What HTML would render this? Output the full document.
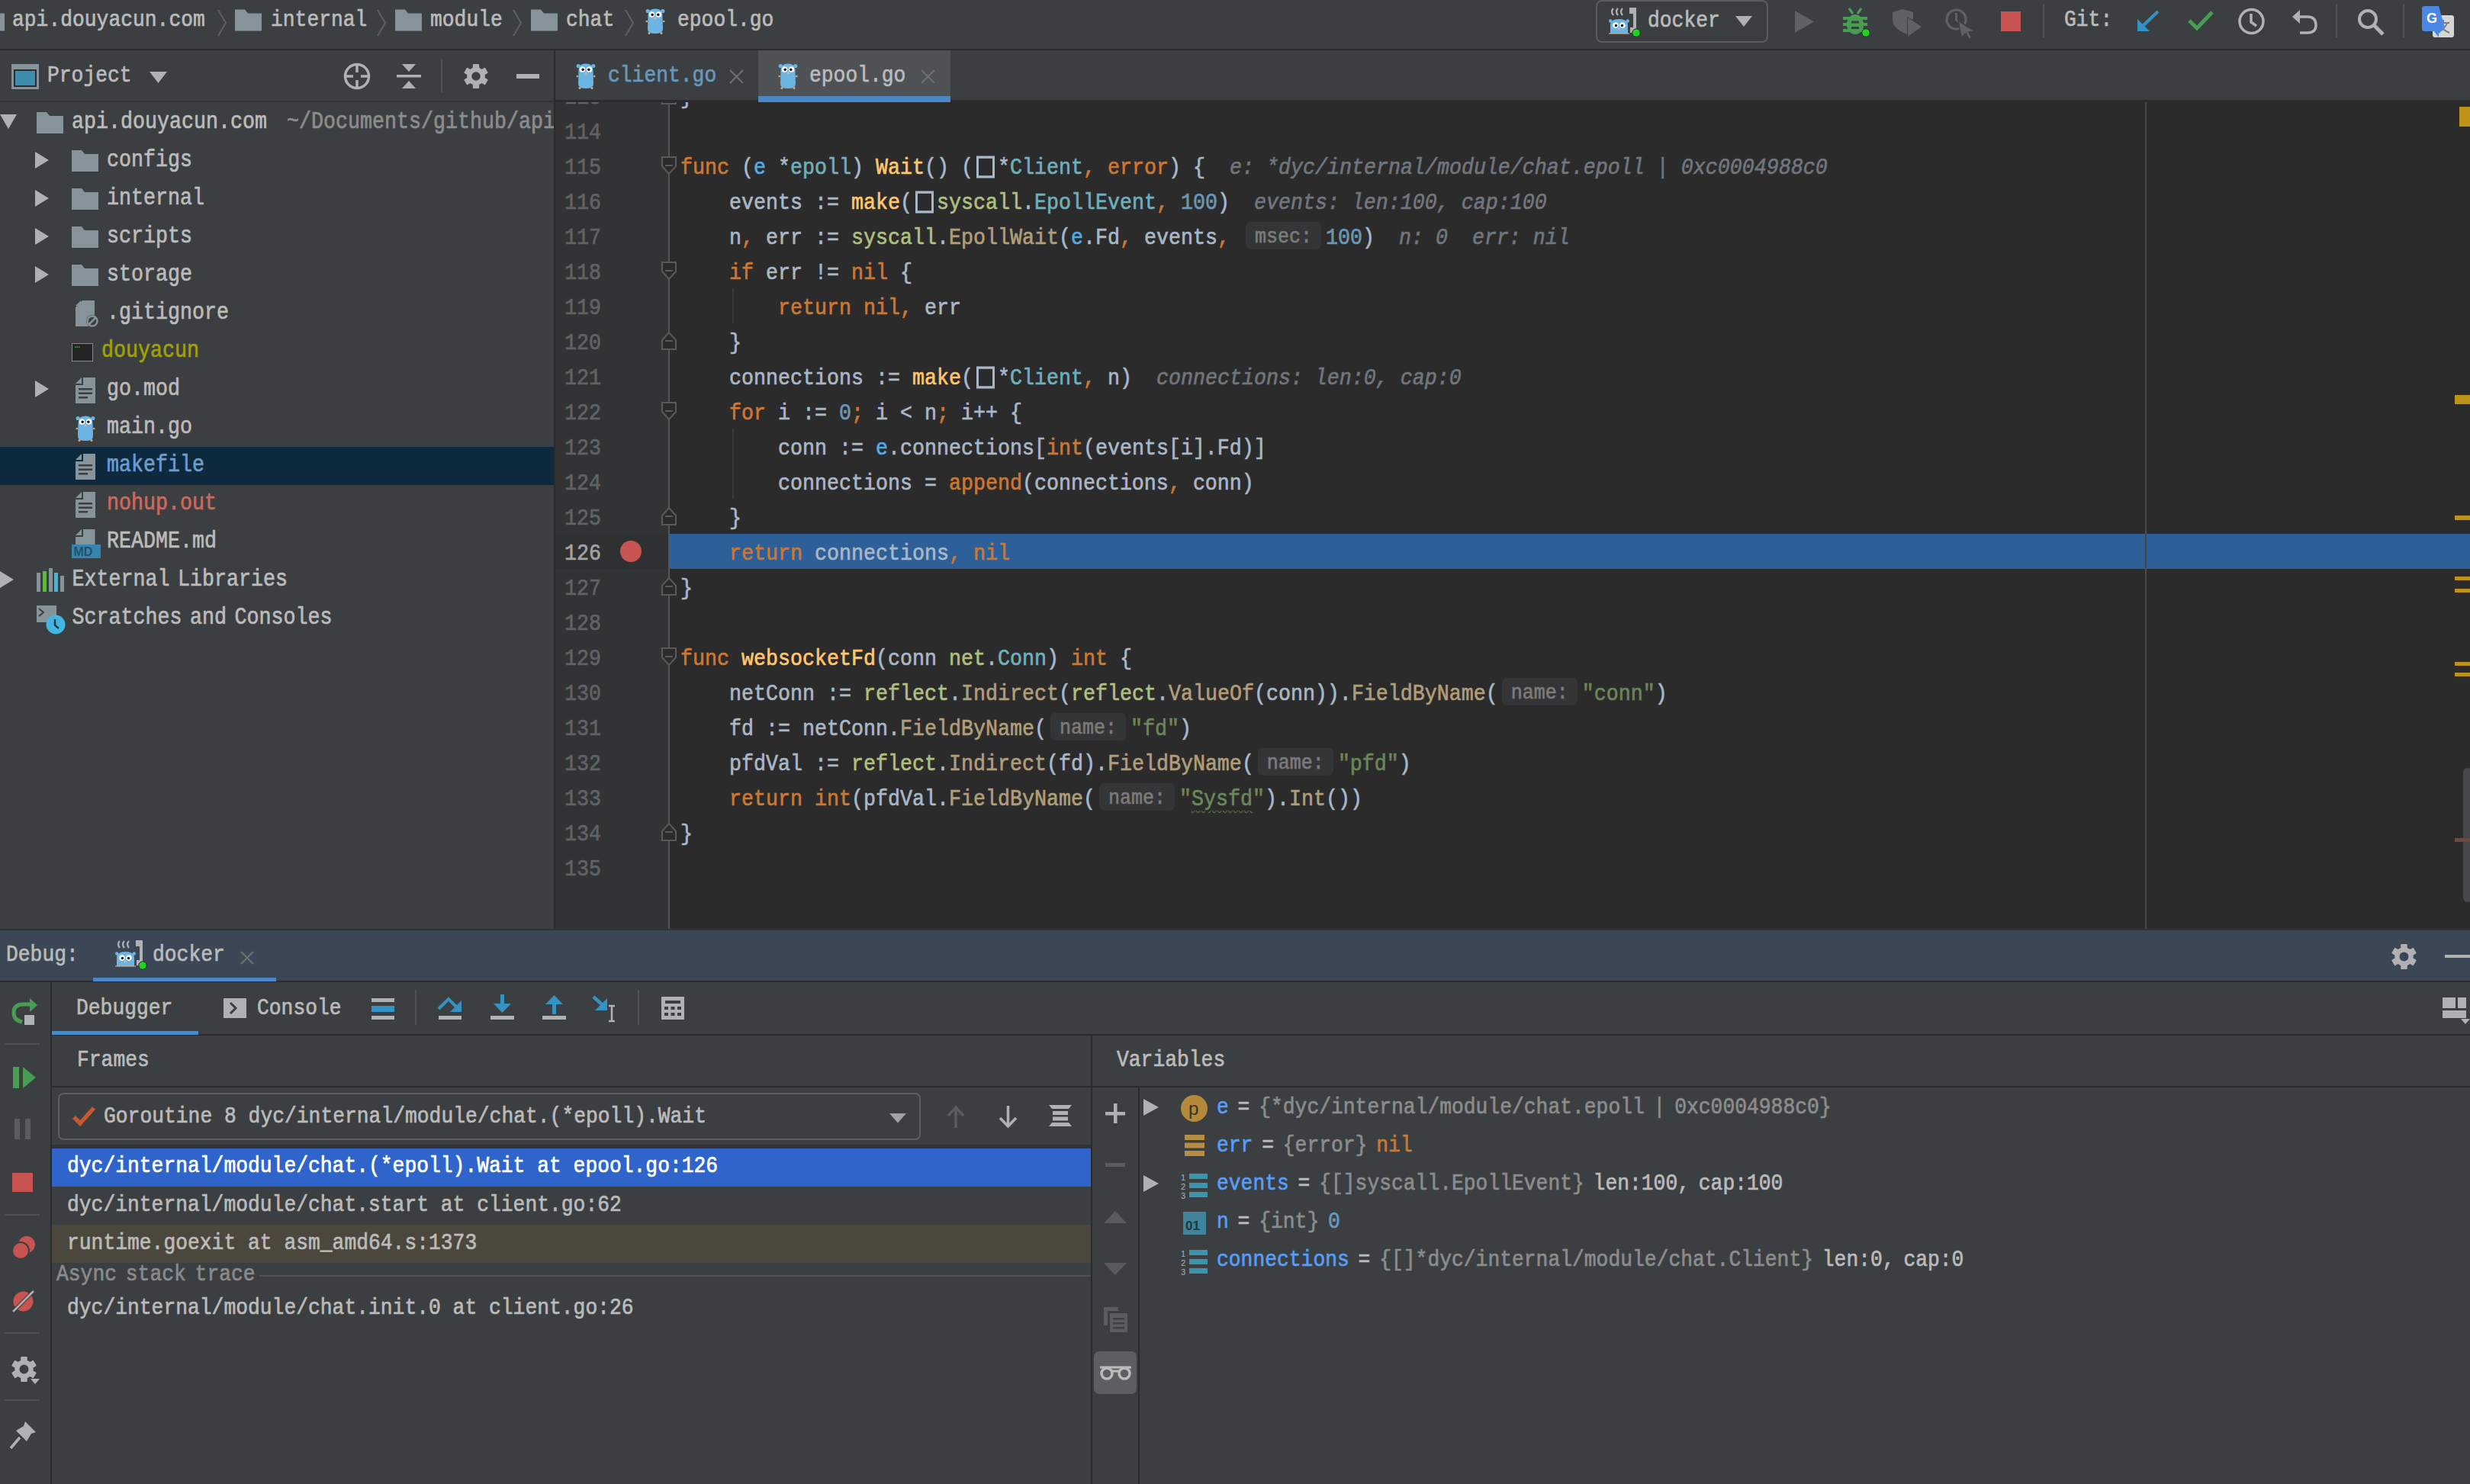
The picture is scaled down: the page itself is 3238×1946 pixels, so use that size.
<!DOCTYPE html><html><head><meta charset="utf-8"><style>
*{box-sizing:border-box}
html,body{margin:0;padding:0}
body{width:3238px;height:1946px;background:#3c3f41;position:relative;overflow:hidden;font-family:'Liberation Mono',monospace;}
.a{position:absolute}
.t{position:absolute;white-space:pre;transform:scaleY(1.15);-webkit-text-stroke:0.6px currentColor}
svg{position:absolute;overflow:visible}
.ed{position:absolute;left:728px;top:134px;width:2510px;height:1084px;overflow:hidden;background:#2b2b2b}
.ln{position:absolute;left:0;width:2510px;height:46px;font-size:26.67px;line-height:54px;white-space:pre;color:#a9b7c6;transform:scaleY(1.12);transform-origin:0 34.1px;-webkit-text-stroke:0.6px currentColor}
.k{color:#cc7832}.fn{color:#ffc66d}.ty{color:#6fafbd}.pk{color:#afbf7e}.me{color:#b09d79}.nu{color:#6897bb}.st{color:#6a8759}.pr{color:#4eade5}
.iv{font-style:italic;color:#70767e}
.hint{display:inline-block;width:99px;height:32px;margin:0 6px 0 5px;background:#343536;border-radius:6px;color:#7b7b7b;font-size:25px;line-height:32px;padding-top:2px;text-align:center;vertical-align:top;position:relative;top:8px}
.bx{display:inline-block;width:32px;height:1px;position:relative}
.bx:after{content:'';position:absolute;left:4px;top:-19.6px;width:24px;height:25.4px;border:3px solid #a9b7c6;border-left-width:3.5px;border-right-width:3.5px;box-sizing:border-box}
</style></head><body>
<div class="a" style="left:0px;top:0px;width:3238px;height:64px;background:#3c3f41;"></div>
<div class="a" style="left:0px;top:64px;width:3238px;height:2px;background:#2b2b2b;"></div>
<div class="a" style="left:0px;top:132px;width:726px;height:2px;background:#323232;"></div>
<div class="a" style="left:726px;top:66px;width:2px;height:1152px;background:#2b2b2b;"></div>
<div class="a" style="left:728px;top:131px;width:2510px;height:3px;background:#2b2b2b;"></div>
<svg style="left:-29px;top:12px" width="35" height="29" viewBox="0 0 35 28"><path d="M0 0 H13 L17 5 H35 V28 H0 Z" fill="#87939a"/></svg>
<div class="t" style="left:16px;top:7.49px;font-size:26.33px;line-height:40px;color:#bbbbbb;transform-origin:0 27.01px;">api.douyacun.com</div>
<svg style="left:285px;top:13px" width="12" height="34" viewBox="0 0 12 34"><path d="M1 0 L11 17 L1 34" stroke="#5c6164" stroke-width="2" fill="none"/></svg>
<svg style="left:308px;top:12px" width="35" height="29" viewBox="0 0 35 28"><path d="M0 0 H13 L17 5 H35 V28 H0 Z" fill="#87939a"/></svg>
<div class="t" style="left:355px;top:7.49px;font-size:26.33px;line-height:40px;color:#bbbbbb;transform-origin:0 27.01px;">internal</div>
<svg style="left:494px;top:13px" width="12" height="34" viewBox="0 0 12 34"><path d="M1 0 L11 17 L1 34" stroke="#5c6164" stroke-width="2" fill="none"/></svg>
<svg style="left:518px;top:12px" width="35" height="29" viewBox="0 0 35 28"><path d="M0 0 H13 L17 5 H35 V28 H0 Z" fill="#87939a"/></svg>
<div class="t" style="left:564px;top:7.49px;font-size:26.33px;line-height:40px;color:#bbbbbb;transform-origin:0 27.01px;">module</div>
<svg style="left:672px;top:13px" width="12" height="34" viewBox="0 0 12 34"><path d="M1 0 L11 17 L1 34" stroke="#5c6164" stroke-width="2" fill="none"/></svg>
<svg style="left:696px;top:12px" width="35" height="29" viewBox="0 0 35 28"><path d="M0 0 H13 L17 5 H35 V28 H0 Z" fill="#87939a"/></svg>
<div class="t" style="left:742px;top:7.49px;font-size:26.33px;line-height:40px;color:#bbbbbb;transform-origin:0 27.01px;">chat</div>
<svg style="left:819px;top:13px" width="12" height="34" viewBox="0 0 12 34"><path d="M1 0 L11 17 L1 34" stroke="#5c6164" stroke-width="2" fill="none"/></svg>
<svg style="left:846px;top:9px" width="26" height="36" viewBox="0 0 26 36"><path d="M3.5 11 Q3.5 2.5 13 2.5 Q22.5 2.5 22.5 11 L23 29 Q23 35 13 35 Q3 35 3 29 Z" fill="#6cb4e2"/><circle cx="3.2" cy="5.5" r="2.6" fill="#6cb4e2"/><circle cx="22.8" cy="5.5" r="2.6" fill="#6cb4e2"/><circle cx="8.5" cy="10" r="3.8" fill="#fff"/><circle cx="17.5" cy="10" r="3.8" fill="#fff"/><circle cx="9.2" cy="10.3" r="1.7" fill="#111"/><circle cx="16.8" cy="10.3" r="1.7" fill="#111"/><ellipse cx="13" cy="14.8" rx="1.8" ry="1.3" fill="#d9b48f"/><circle cx="1.8" cy="19" r="1.3" fill="#d9a982"/><circle cx="24.2" cy="19" r="1.3" fill="#d9a982"/><circle cx="5" cy="34.5" r="1.5" fill="#d9a982"/><circle cx="21" cy="34.5" r="1.5" fill="#d9a982"/></svg>
<div class="t" style="left:888px;top:7.49px;font-size:26.33px;line-height:40px;color:#bbbbbb;transform-origin:0 27.01px;">epool.go</div>
<div class="a" style="left:2092px;top:0px;width:226px;height:56px;border:2px solid #5a5d5f;border-radius:8px"></div>
<svg style="left:2109px;top:9px" width="42" height="40" viewBox="0 0 42 40"><path d="M6 2 Q2 6 6 11 M12 2 Q8 6 12 11 M18 2 Q14 6 18 11" stroke="#afb1b3" stroke-width="2.2" fill="none"/><path d="M27 1 H36 V34 H28 V27 H32 V9 H27 Z" fill="#afb1b3"/><path d="M2 24 Q2 16 13.5 16 Q25 16 25 24 V35 H2 Z" fill="#6cb4e2"/><circle cx="2.2" cy="18.5" r="2.2" fill="#6cb4e2"/><circle cx="24.8" cy="18.5" r="2.2" fill="#6cb4e2"/><circle cx="9" cy="24" r="3.8" fill="#fff"/><circle cx="18" cy="24" r="3.8" fill="#fff"/><circle cx="9.5" cy="24.5" r="1.7" fill="#111"/><circle cx="17.5" cy="24.5" r="1.7" fill="#111"/><ellipse cx="13.5" cy="29" rx="1.8" ry="1.2" fill="#d9b48f"/><rect x="0" y="34" width="27" height="2" fill="#d9a982" opacity="0.6"/><circle cx="36" cy="34" r="5.2" fill="#1ed41e" stroke="#2b2b2b" stroke-width="1"/></svg>
<div class="t" style="left:2160px;top:7.99px;font-size:26.33px;line-height:40px;color:#bbbbbb;transform-origin:0 27.01px;">docker</div>
<svg style="left:2275px;top:21px" width="22" height="14" viewBox="0 0 22 14"><path d="M0 0 H22 L11.0 14 Z" fill="#afb1b3"/></svg>
<svg style="left:2353px;top:14px" width="25" height="29" viewBox="0 0 25 29"><path d="M0 0 L25 14.5 L0 29 Z" fill="#5f6163"/></svg>
<svg style="left:2416px;top:10px" width="32" height="36" viewBox="0 0 32 36"><path d="M8 1 L13 8 M24 1 L19 8" stroke="#499c54" stroke-width="3.2"/><ellipse cx="16" cy="22" rx="11" ry="13" fill="#499c54"/><rect x="0" y="12" width="32" height="4" fill="#499c54"/><rect x="0" y="20" width="32" height="4" fill="#499c54"/><rect x="0" y="28" width="32" height="4" fill="#499c54"/><rect x="11" y="17.5" width="10" height="3" fill="#3c3f41"/><rect x="11" y="25" width="10" height="3" fill="#3c3f41"/><circle cx="30" cy="33" r="5.2" fill="#1ed41e" stroke="#2b2b2b" stroke-width="1"/></svg>
<svg style="left:2481px;top:12px" width="39" height="36" viewBox="0 0 39 36"><path d="M0 4 L13 0 L27 4 V14 L19 10 V33 Q6 28 1 20 Q0 17 0 14 Z" fill="#5f6163"/><path d="M20 11 L38 23 L20 36 Z" fill="#5f6163"/></svg>
<svg style="left:2550px;top:11px" width="40" height="40" viewBox="0 0 40 40"><circle cx="14.5" cy="14.5" r="12.5" stroke="#5f6163" stroke-width="3.2" fill="none"/><path d="M14.5 6 V15 L19 19" stroke="#5f6163" stroke-width="3" fill="none"/><path d="M17 16 L39 30 L31 31 L35 39 L31 40 L27 33 L21 38 Z" fill="#5f6163" stroke="#3c3f41" stroke-width="1.5"/></svg>
<div class="a" style="left:2623px;top:15px;width:26px;height:26px;background:#c75450;"></div>
<div class="a" style="left:2678px;top:5px;width:2px;height:44px;background:#4f5254;"></div>
<div class="t" style="left:2706px;top:6.99px;font-size:26.33px;line-height:40px;color:#bbbbbb;transform-origin:0 27.01px;">Git:</div>
<svg style="left:2802px;top:13px" width="29" height="28" viewBox="0 0 29 28"><path d="M27 2 L6 22" stroke="#3592c4" stroke-width="4"/><path d="M0 12 V28 H16 Z" fill="#3592c4"/></svg>
<svg style="left:2868px;top:14px" width="34" height="26" viewBox="0 0 34 26"><path d="M2 13 L12 23 L32 2" stroke="#499c54" stroke-width="5" fill="none"/></svg>
<svg style="left:2933px;top:10px" width="37" height="36" viewBox="0 0 37 36"><circle cx="18.5" cy="18" r="15.5" stroke="#afb1b3" stroke-width="3.5" fill="none"/><path d="M18 8 V19 L25 24" stroke="#afb1b3" stroke-width="3.5" fill="none"/></svg>
<svg style="left:3005px;top:12px" width="33" height="32" viewBox="0 0 33 32"><path d="M8 10 H20 Q31 10 31 21 Q31 31 20 31 H10" stroke="#afb1b3" stroke-width="3.5" fill="none"/><path d="M0 10 L10 1 V19 Z" fill="#afb1b3"/></svg>
<div class="a" style="left:3062px;top:5px;width:2px;height:44px;background:#4f5254;"></div>
<svg style="left:3090px;top:11px" width="36" height="36" viewBox="0 0 36 36"><circle cx="14" cy="14" r="11" stroke="#afb1b3" stroke-width="4" fill="none"/><path d="M22 22 L34 34" stroke="#afb1b3" stroke-width="5"/></svg>
<div class="a" style="left:3150px;top:5px;width:2px;height:44px;background:#4f5254;"></div>
<svg style="left:3175px;top:8px" width="42" height="41" viewBox="0 0 42 41"><rect x="14" y="12" width="28" height="29" rx="3" fill="#d6d6d6"/><path d="M20 22 H36 M28 18 V22 M22 34 Q30 30 33 22 M24 25 Q28 32 36 35" stroke="#7d7d7d" stroke-width="2" fill="none"/><path d="M3 0 H22 L30 28 L22 36 V41 L16 33 H3 Q0 33 0 30 V3 Q0 0 3 0 Z" fill="#4a88e4"/><text x="6" y="22" font-family="Liberation Sans" font-weight="bold" font-size="18" fill="#fff">G</text></svg>
<svg style="left:15px;top:84px" width="36" height="33" viewBox="0 0 36 33"><rect x="0" y="0" width="36" height="33" fill="#87939a"/><rect x="3" y="7" width="30" height="23" fill="#2b2d2e"/><rect x="5" y="9" width="26" height="19" fill="#3d8dae"/></svg>
<div class="t" style="left:62px;top:79.99px;font-size:26.33px;line-height:40px;color:#bbbbbb;transform-origin:0 27.01px;">Project</div>
<svg style="left:196px;top:94px" width="23" height="15" viewBox="0 0 23 15"><path d="M0 0 H23 L11.5 15 Z" fill="#afb1b3"/></svg>
<svg style="left:450px;top:82px" width="36" height="36" viewBox="0 0 36 36"><circle cx="18" cy="18" r="15.5" stroke="#afb1b3" stroke-width="3.5" fill="none"/><path d="M18 2 V13 M18 23 V34 M2 18 H13 M23 18 H34" stroke="#afb1b3" stroke-width="3.5"/></svg>
<svg style="left:520px;top:84px" width="32" height="32" viewBox="0 0 32 32"><rect x="0" y="14" width="32" height="3.5" fill="#afb1b3"/><path d="M7 0 H25 L16 10 Z M7 32 H25 L16 22 Z" fill="#afb1b3"/><rect x="14" y="0" width="4" height="4" fill="#afb1b3"/></svg>
<div class="a" style="left:578px;top:77px;width:2px;height:44px;background:#4f5254;"></div>
<svg style="left:608px;top:84px" width="32" height="32" viewBox="0 0 32 32"><circle cx="16.0" cy="16.0" r="11.84" fill="#afb1b3"/><rect x="11.84" y="0" width="8.32" height="32" rx="0.96" fill="#afb1b3" transform="rotate(0 16.0 16.0)"/><rect x="11.84" y="0" width="8.32" height="32" rx="0.96" fill="#afb1b3" transform="rotate(60 16.0 16.0)"/><rect x="11.84" y="0" width="8.32" height="32" rx="0.96" fill="#afb1b3" transform="rotate(120 16.0 16.0)"/><circle cx="16.0" cy="16.0" r="5.76" fill="#3c3f41"/></svg>
<div class="a" style="left:677px;top:97px;width:30px;height:6px;background:#afb1b3;"></div>
<svg style="left:755px;top:81px" width="26" height="36" viewBox="0 0 26 36"><path d="M3.5 11 Q3.5 2.5 13 2.5 Q22.5 2.5 22.5 11 L23 29 Q23 35 13 35 Q3 35 3 29 Z" fill="#6cb4e2"/><circle cx="3.2" cy="5.5" r="2.6" fill="#6cb4e2"/><circle cx="22.8" cy="5.5" r="2.6" fill="#6cb4e2"/><circle cx="8.5" cy="10" r="3.8" fill="#fff"/><circle cx="17.5" cy="10" r="3.8" fill="#fff"/><circle cx="9.2" cy="10.3" r="1.7" fill="#111"/><circle cx="16.8" cy="10.3" r="1.7" fill="#111"/><ellipse cx="13" cy="14.8" rx="1.8" ry="1.3" fill="#d9b48f"/><circle cx="1.8" cy="19" r="1.3" fill="#d9a982"/><circle cx="24.2" cy="19" r="1.3" fill="#d9a982"/><circle cx="5" cy="34.5" r="1.5" fill="#d9a982"/><circle cx="21" cy="34.5" r="1.5" fill="#d9a982"/></svg>
<div class="t" style="left:797px;top:79.99px;font-size:26.33px;line-height:40px;color:#6897bb;transform-origin:0 27.01px;">client.go</div>
<svg style="left:956px;top:91px" width="19" height="19" viewBox="0 0 19 19"><path d="M1 1 L18 18 M18 1 L1 18" stroke="#6e7072" stroke-width="2.2"/></svg>
<div class="a" style="left:994px;top:66px;width:252px;height:60px;background:#4e5254;"></div>
<div class="a" style="left:994px;top:126px;width:252px;height:8px;background:#4a88c7;"></div>
<svg style="left:1020px;top:81px" width="26" height="36" viewBox="0 0 26 36"><path d="M3.5 11 Q3.5 2.5 13 2.5 Q22.5 2.5 22.5 11 L23 29 Q23 35 13 35 Q3 35 3 29 Z" fill="#6cb4e2"/><circle cx="3.2" cy="5.5" r="2.6" fill="#6cb4e2"/><circle cx="22.8" cy="5.5" r="2.6" fill="#6cb4e2"/><circle cx="8.5" cy="10" r="3.8" fill="#fff"/><circle cx="17.5" cy="10" r="3.8" fill="#fff"/><circle cx="9.2" cy="10.3" r="1.7" fill="#111"/><circle cx="16.8" cy="10.3" r="1.7" fill="#111"/><ellipse cx="13" cy="14.8" rx="1.8" ry="1.3" fill="#d9b48f"/><circle cx="1.8" cy="19" r="1.3" fill="#d9a982"/><circle cx="24.2" cy="19" r="1.3" fill="#d9a982"/><circle cx="5" cy="34.5" r="1.5" fill="#d9a982"/><circle cx="21" cy="34.5" r="1.5" fill="#d9a982"/></svg>
<div class="t" style="left:1061px;top:79.99px;font-size:26.33px;line-height:40px;color:#bbbbbb;transform-origin:0 27.01px;">epool.go</div>
<svg style="left:1207px;top:91px" width="19" height="19" viewBox="0 0 19 19"><path d="M1 1 L18 18 M18 1 L1 18" stroke="#6e7072" stroke-width="2.2"/></svg>
<div class="a" style="left:0px;top:586px;width:726px;height:50px;background:#0d293e;"></div>
<svg style="left:0px;top:150px" width="22" height="19" viewBox="0 0 22 19"><path d="M0 0 H22 L11.0 19 Z" fill="#afb1b3"/></svg>
<svg style="left:48px;top:147px" width="35" height="28" viewBox="0 0 35 28"><path d="M0 0 H13 L17 5 H35 V28 H0 Z" fill="#87939a"/></svg>
<div class="t" style="left:94px;top:140.60px;font-size:26.67px;line-height:40px;color:#bbbbbb;transform-origin:0 27.10px;">api.douyacun.com</div>
<div class="a" style="left:0;top:134px;width:726px;height:60px;overflow:hidden">
<div class="t" style="left:376px;top:6.60px;font-size:26.67px;line-height:40px;color:#8c8c8c;transform-origin:0 27.10px;">~/Documents/github/api.douyacun.com</div>
</div>
<svg style="left:46px;top:199.0px" width="18" height="22" viewBox="0 0 18 22"><path d="M0 0 L18 11.0 L0 22 Z" fill="#afb1b3"/></svg>
<svg style="left:94px;top:196.7px" width="35" height="28" viewBox="0 0 35 28"><path d="M0 0 H13 L17 5 H35 V28 H0 Z" fill="#87939a"/></svg>
<div class="t" style="left:140px;top:190.60px;font-size:26.67px;line-height:40px;color:#bbbbbb;transform-origin:0 27.10px;">configs</div>
<svg style="left:46px;top:249.0px" width="18" height="22" viewBox="0 0 18 22"><path d="M0 0 L18 11.0 L0 22 Z" fill="#afb1b3"/></svg>
<svg style="left:94px;top:246.7px" width="35" height="28" viewBox="0 0 35 28"><path d="M0 0 H13 L17 5 H35 V28 H0 Z" fill="#87939a"/></svg>
<div class="t" style="left:140px;top:240.60px;font-size:26.67px;line-height:40px;color:#bbbbbb;transform-origin:0 27.10px;">internal</div>
<svg style="left:46px;top:299.0px" width="18" height="22" viewBox="0 0 18 22"><path d="M0 0 L18 11.0 L0 22 Z" fill="#afb1b3"/></svg>
<svg style="left:94px;top:296.7px" width="35" height="28" viewBox="0 0 35 28"><path d="M0 0 H13 L17 5 H35 V28 H0 Z" fill="#87939a"/></svg>
<div class="t" style="left:140px;top:290.60px;font-size:26.67px;line-height:40px;color:#bbbbbb;transform-origin:0 27.10px;">scripts</div>
<svg style="left:46px;top:349.0px" width="18" height="22" viewBox="0 0 18 22"><path d="M0 0 L18 11.0 L0 22 Z" fill="#afb1b3"/></svg>
<svg style="left:94px;top:346.7px" width="35" height="28" viewBox="0 0 35 28"><path d="M0 0 H13 L17 5 H35 V28 H0 Z" fill="#87939a"/></svg>
<div class="t" style="left:140px;top:340.60px;font-size:26.67px;line-height:40px;color:#bbbbbb;transform-origin:0 27.10px;">storage</div>
<svg style="left:99px;top:393.7px" width="30" height="36" viewBox="0 0 30 36"><path d="M9 0 H25 V22 L18 34 H0 V9 Z" fill="#87939a"/><path d="M0 7 L7 0 V7 Z" fill="#87939a"/><circle cx="22" cy="27" r="8" fill="#3c3f41"/><circle cx="22" cy="27" r="6.5" stroke="#87939a" stroke-width="2.5" fill="none"/><path d="M17.5 31.5 L26.5 22.5" stroke="#87939a" stroke-width="2.5"/></svg>
<div class="t" style="left:140px;top:390.60px;font-size:26.67px;line-height:40px;color:#bbbbbb;transform-origin:0 27.10px;">.gitignore</div>
<svg style="left:94px;top:449.7px" width="28" height="24" viewBox="0 0 28 24"><rect x="0.5" y="0.5" width="27" height="23" fill="#252525" stroke="#8a8a8a" stroke-width="1"/><path d="M4 5 H11" stroke="#3fc03f" stroke-width="1.5" stroke-dasharray="1.5 1"/></svg>
<div class="t" style="left:133px;top:440.60px;font-size:26.67px;line-height:40px;color:#a3a000;transform-origin:0 27.10px;">douyacun</div>
<svg style="left:46px;top:499.00000000000006px" width="18" height="22" viewBox="0 0 18 22"><path d="M0 0 L18 11.0 L0 22 Z" fill="#afb1b3"/></svg>
<svg style="left:99px;top:494.70000000000005px" width="26" height="34" viewBox="0 0 26 34"><path d="M10 0 H26 V34 H0 V10 H10 Z" fill="#87939a"/><path d="M0 8 L8 0 V8 Z" fill="#87939a"/><rect x="4" y="14" width="18" height="2.5" fill="#3c3f41"/><rect x="4" y="19.5" width="18" height="2.5" fill="#3c3f41"/><rect x="4" y="25" width="12" height="2.5" fill="#3c3f41"/></svg>
<div class="t" style="left:140px;top:490.60px;font-size:26.67px;line-height:40px;color:#bbbbbb;transform-origin:0 27.10px;">go.mod</div>
<svg style="left:99px;top:543px" width="26" height="36" viewBox="0 0 26 36"><path d="M3.5 11 Q3.5 2.5 13 2.5 Q22.5 2.5 22.5 11 L23 29 Q23 35 13 35 Q3 35 3 29 Z" fill="#6cb4e2"/><circle cx="3.2" cy="5.5" r="2.6" fill="#6cb4e2"/><circle cx="22.8" cy="5.5" r="2.6" fill="#6cb4e2"/><circle cx="8.5" cy="10" r="3.8" fill="#fff"/><circle cx="17.5" cy="10" r="3.8" fill="#fff"/><circle cx="9.2" cy="10.3" r="1.7" fill="#111"/><circle cx="16.8" cy="10.3" r="1.7" fill="#111"/><ellipse cx="13" cy="14.8" rx="1.8" ry="1.3" fill="#d9b48f"/><circle cx="1.8" cy="19" r="1.3" fill="#d9a982"/><circle cx="24.2" cy="19" r="1.3" fill="#d9a982"/><circle cx="5" cy="34.5" r="1.5" fill="#d9a982"/><circle cx="21" cy="34.5" r="1.5" fill="#d9a982"/></svg>
<div class="t" style="left:140px;top:540.60px;font-size:26.67px;line-height:40px;color:#bbbbbb;transform-origin:0 27.10px;">main.go</div>
<svg style="left:99px;top:594.7px" width="26" height="34" viewBox="0 0 26 34"><path d="M10 0 H26 V34 H0 V10 H10 Z" fill="#87939a"/><path d="M0 8 L8 0 V8 Z" fill="#87939a"/><rect x="4" y="14" width="18" height="2.5" fill="#3c3f41"/><rect x="4" y="19.5" width="18" height="2.5" fill="#3c3f41"/><rect x="4" y="25" width="12" height="2.5" fill="#3c3f41"/></svg>
<div class="t" style="left:140px;top:590.60px;font-size:26.67px;line-height:40px;color:#6a9ccf;transform-origin:0 27.10px;">makefile</div>
<svg style="left:99px;top:644.7px" width="26" height="34" viewBox="0 0 26 34"><path d="M10 0 H26 V34 H0 V10 H10 Z" fill="#87939a"/><path d="M0 8 L8 0 V8 Z" fill="#87939a"/><rect x="4" y="14" width="18" height="2.5" fill="#3c3f41"/><rect x="4" y="19.5" width="18" height="2.5" fill="#3c3f41"/><rect x="4" y="25" width="12" height="2.5" fill="#3c3f41"/></svg>
<div class="t" style="left:140px;top:640.60px;font-size:26.67px;line-height:40px;color:#d1675a;transform-origin:0 27.10px;">nohup.out</div>
<svg style="left:94px;top:694px" width="38" height="38" viewBox="0 0 38 38"><path d="M15 0 H30.5 V20 H5 V10 L15 10 Z" fill="#87939a"/><path d="M5 8 L13 0 V8 Z" fill="#87939a"/><rect x="0" y="20" width="38" height="18" fill="#3592c4" opacity="0.85"/><text x="2.5" y="35" font-family="Liberation Sans" font-weight="bold" font-size="16" fill="#25526a">MD</text></svg>
<div class="t" style="left:140px;top:690.60px;font-size:26.67px;line-height:40px;color:#bbbbbb;transform-origin:0 27.10px;">README.md</div>
<svg style="left:0px;top:748.7px" width="18" height="22" viewBox="0 0 18 22"><path d="M0 0 L18 11.0 L0 22 Z" fill="#afb1b3"/></svg>
<svg style="left:48px;top:744.7px" width="36" height="31" viewBox="0 0 36 31"><rect x="0" y="6" width="5" height="25" fill="#87939a"/><rect x="8" y="4" width="5" height="27" fill="#62b543"/><rect x="16" y="0" width="5" height="31" fill="#87939a"/><rect x="23" y="6" width="5" height="25" fill="#40b6e0"/><rect x="31" y="10" width="5" height="21" fill="#87939a"/></svg>
<div class="t" style="left:94.5px;top:740.60px;font-size:26.67px;line-height:40px;color:#bbbbbb;transform-origin:0 27.10px;word-spacing:-5.5px">External Libraries</div>
<svg style="left:48px;top:793.7px" width="38" height="38" viewBox="0 0 38 38"><rect x="0" y="0" width="26" height="22" fill="#87939a"/><path d="M3 4 L9 9 L3 14" stroke="#3c3f41" stroke-width="2" fill="none"/><circle cx="25" cy="25" r="12.5" fill="#40b6e0"/><path d="M24 18 V26 L29 30" stroke="#1d3a4a" stroke-width="2.5" fill="none"/></svg>
<div class="t" style="left:94.5px;top:790.60px;font-size:26.67px;line-height:40px;color:#bbbbbb;transform-origin:0 27.10px;word-spacing:-5.5px">Scratches and Consoles</div>
<div class="ed">
<div class="a" style="left:0;top:0;width:148px;height:1085px;background:#313335"></div>
<div class="a" style="left:148px;top:0;width:2px;height:1085px;background:#555555"></div>
<div class="a" style="left:150px;top:566px;width:2360px;height:46px;background:#2d6099"></div>
<div class="a" style="left:0;top:566px;width:148px;height:46px;background:#2f3031"></div>
<div class="a" style="left:2084px;top:0;width:2px;height:1085px;background:#4b4b4b"></div>
<div class="a" style="left:2084px;top:566px;width:2px;height:46px;background:#4a4540"></div>
<div class="a" style="left:2496px;top:5.599999999999994px;width:14px;height:26.0px;background:#be9117"></div>
<div class="a" style="left:2490px;top:384px;width:20px;height:12px;background:#be9117"></div>
<div class="a" style="left:2490px;top:542px;width:20px;height:6px;background:#be9117"></div>
<div class="a" style="left:2490px;top:622px;width:20px;height:5px;background:#be9117"></div>
<div class="a" style="left:2490px;top:638px;width:20px;height:5px;background:#be9117"></div>
<div class="a" style="left:2490px;top:734px;width:20px;height:5px;background:#be9117"></div>
<div class="a" style="left:2490px;top:748px;width:20px;height:5px;background:#be9117"></div>
<div class="a" style="left:2501px;top:873px;width:12px;height:176px;background:#464849;border-radius:6px"></div>
<div class="a" style="left:2490px;top:965px;width:20px;height:5px;background:#6e4a3e"></div>
<div class="ln" style="top:-32px;left:0;width:60px;color:#606366;text-align:right;padding:0">113</div>
<div class="ln" style="top:14px;left:0;width:60px;color:#606366;text-align:right;padding:0">114</div>
<div class="ln" style="top:60px;left:0;width:60px;color:#606366;text-align:right;padding:0">115</div>
<div class="ln" style="top:106px;left:0;width:60px;color:#606366;text-align:right;padding:0">116</div>
<div class="ln" style="top:152px;left:0;width:60px;color:#606366;text-align:right;padding:0">117</div>
<div class="ln" style="top:198px;left:0;width:60px;color:#606366;text-align:right;padding:0">118</div>
<div class="ln" style="top:244px;left:0;width:60px;color:#606366;text-align:right;padding:0">119</div>
<div class="ln" style="top:290px;left:0;width:60px;color:#606366;text-align:right;padding:0">120</div>
<div class="ln" style="top:336px;left:0;width:60px;color:#606366;text-align:right;padding:0">121</div>
<div class="ln" style="top:382px;left:0;width:60px;color:#606366;text-align:right;padding:0">122</div>
<div class="ln" style="top:428px;left:0;width:60px;color:#606366;text-align:right;padding:0">123</div>
<div class="ln" style="top:474px;left:0;width:60px;color:#606366;text-align:right;padding:0">124</div>
<div class="ln" style="top:520px;left:0;width:60px;color:#606366;text-align:right;padding:0">125</div>
<div class="ln" style="top:566px;left:0;width:60px;color:#a4a3a3;text-align:right;padding:0">126</div>
<div class="ln" style="top:612px;left:0;width:60px;color:#606366;text-align:right;padding:0">127</div>
<div class="ln" style="top:658px;left:0;width:60px;color:#606366;text-align:right;padding:0">128</div>
<div class="ln" style="top:704px;left:0;width:60px;color:#606366;text-align:right;padding:0">129</div>
<div class="ln" style="top:750px;left:0;width:60px;color:#606366;text-align:right;padding:0">130</div>
<div class="ln" style="top:796px;left:0;width:60px;color:#606366;text-align:right;padding:0">131</div>
<div class="ln" style="top:842px;left:0;width:60px;color:#606366;text-align:right;padding:0">132</div>
<div class="ln" style="top:888px;left:0;width:60px;color:#606366;text-align:right;padding:0">133</div>
<div class="ln" style="top:934px;left:0;width:60px;color:#606366;text-align:right;padding:0">134</div>
<div class="ln" style="top:980px;left:0;width:60px;color:#606366;text-align:right;padding:0">135</div>
<div class="a" style="left:232px;top:244px;width:2px;height:46px;background:#393939"></div>
<div class="a" style="left:232px;top:428px;width:2px;height:92px;background:#393939"></div>
<div class="a" style="left:85px;top:575px;width:28px;height:28px;border-radius:50%;background:#c75450"></div>
<svg style="left:139px;top:-21px" width="20" height="24"><path d="M1 23 H19 V11 L10 1 L1 11 Z" fill="#2b2b2b" stroke="#5a5a5a" stroke-width="2"/><path d="M5 12 H15" stroke="#5a5a5a" stroke-width="2"/></svg>
<svg style="left:139px;top:71px" width="20" height="24"><path d="M1 1 H19 V13 L10 23 L1 13 Z" fill="#2b2b2b" stroke="#5a5a5a" stroke-width="2"/><path d="M5 12 H15" stroke="#5a5a5a" stroke-width="2"/></svg>
<svg style="left:139px;top:209px" width="20" height="24"><path d="M1 1 H19 V13 L10 23 L1 13 Z" fill="#2b2b2b" stroke="#5a5a5a" stroke-width="2"/><path d="M5 12 H15" stroke="#5a5a5a" stroke-width="2"/></svg>
<svg style="left:139px;top:301px" width="20" height="24"><path d="M1 23 H19 V11 L10 1 L1 11 Z" fill="#2b2b2b" stroke="#5a5a5a" stroke-width="2"/><path d="M5 12 H15" stroke="#5a5a5a" stroke-width="2"/></svg>
<svg style="left:139px;top:393px" width="20" height="24"><path d="M1 1 H19 V13 L10 23 L1 13 Z" fill="#2b2b2b" stroke="#5a5a5a" stroke-width="2"/><path d="M5 12 H15" stroke="#5a5a5a" stroke-width="2"/></svg>
<svg style="left:139px;top:531px" width="20" height="24"><path d="M1 23 H19 V11 L10 1 L1 11 Z" fill="#2b2b2b" stroke="#5a5a5a" stroke-width="2"/><path d="M5 12 H15" stroke="#5a5a5a" stroke-width="2"/></svg>
<svg style="left:139px;top:623px" width="20" height="24"><path d="M1 23 H19 V11 L10 1 L1 11 Z" fill="#2b2b2b" stroke="#5a5a5a" stroke-width="2"/><path d="M5 12 H15" stroke="#5a5a5a" stroke-width="2"/></svg>
<svg style="left:139px;top:715px" width="20" height="24"><path d="M1 1 H19 V13 L10 23 L1 13 Z" fill="#2b2b2b" stroke="#5a5a5a" stroke-width="2"/><path d="M5 12 H15" stroke="#5a5a5a" stroke-width="2"/></svg>
<svg style="left:139px;top:945px" width="20" height="24"><path d="M1 23 H19 V11 L10 1 L1 11 Z" fill="#2b2b2b" stroke="#5a5a5a" stroke-width="2"/><path d="M5 12 H15" stroke="#5a5a5a" stroke-width="2"/></svg>
<div class="ln" style="top:-32px;left:164px">}</div>
<div class="ln" style="top:60px;left:164px"><span class="k">func</span> (<span class="pr">e</span> *<span class="ty">epoll</span>) <span class="fn">Wait</span>() (<span class="bx"></span>*<span class="ty">Client</span><span class="k">, </span><span class="k">error</span>) {<span class="iv" style="margin-left:32px">e: *dyc/internal/module/chat.epoll | 0xc0004988c0</span></div>
<div class="ln" style="top:106px;left:164px">    events := <span class="fn">make</span>(<span class="bx"></span><span class="pk">syscall</span>.<span class="ty">EpollEvent</span><span class="k">, </span><span class="nu">100</span>)<span class="iv" style="margin-left:32px">events: len:100, cap:100</span></div>
<div class="ln" style="top:152px;left:164px">    n<span class="k">, </span>err := <span class="pk">syscall</span>.<span class="me">EpollWait</span>(<span class="pr">e</span>.Fd<span class="k">, </span>events<span class="k">, </span><span class="hint">msec:</span><span class="nu">100</span>)<span class="iv" style="margin-left:32px">n: 0  err: nil</span></div>
<div class="ln" style="top:198px;left:164px">    <span class="k">if</span> err != <span class="k">nil</span> {</div>
<div class="ln" style="top:244px;left:164px">        <span class="k">return</span> <span class="k">nil</span><span class="k">, </span>err</div>
<div class="ln" style="top:290px;left:164px">    }</div>
<div class="ln" style="top:336px;left:164px">    connections := <span class="fn">make</span>(<span class="bx"></span>*<span class="ty">Client</span><span class="k">, </span>n)<span class="iv" style="margin-left:32px">connections: len:0, cap:0</span></div>
<div class="ln" style="top:382px;left:164px">    <span class="k">for</span> i := <span class="nu">0</span><span class="k">; </span>i &lt; n<span class="k">; </span>i++ {</div>
<div class="ln" style="top:428px;left:164px">        conn := <span class="pr">e</span>.connections[<span class="k">int</span>(events[i].Fd)]</div>
<div class="ln" style="top:474px;left:164px">        connections = <span class="k">append</span>(connections<span class="k">, </span>conn)</div>
<div class="ln" style="top:520px;left:164px">    }</div>
<div class="ln" style="top:566px;left:164px">    <span class="k">return</span> connections<span class="k">, </span><span class="k">nil</span></div>
<div class="ln" style="top:612px;left:164px">}</div>
<div class="ln" style="top:704px;left:164px"><span class="k">func</span> <span class="fn">websocketFd</span>(conn <span class="pk">net</span>.<span class="ty">Conn</span>) <span class="k">int</span> {</div>
<div class="ln" style="top:750px;left:164px">    netConn := <span class="pk">reflect</span>.<span class="me">Indirect</span>(<span class="pk">reflect</span>.<span class="me">ValueOf</span>(conn)).<span class="me">FieldByName</span>(<span class="hint">name:</span><span class="st">&quot;conn&quot;</span>)</div>
<div class="ln" style="top:796px;left:164px">    fd := netConn.<span class="me">FieldByName</span>(<span class="hint">name:</span><span class="st">&quot;fd&quot;</span>)</div>
<div class="ln" style="top:842px;left:164px">    pfdVal := <span class="pk">reflect</span>.<span class="me">Indirect</span>(fd).<span class="me">FieldByName</span>(<span class="hint">name:</span><span class="st">&quot;pfd&quot;</span>)</div>
<div class="ln" style="top:888px;left:164px">    <span class="k">return</span> <span class="k">int</span>(pfdVal.<span class="me">FieldByName</span>(<span class="hint">name:</span><span class="st">&quot;</span><span class="st" style="text-decoration:underline wavy #557a44;text-decoration-thickness:1px;text-underline-offset:5px">Sysfd</span><span class="st">&quot;</span>).<span class="me">Int</span>())</div>
<div class="ln" style="top:934px;left:164px">}</div>
</div>
<div class="a" style="left:0px;top:1218px;width:3238px;height:2px;background:#323232;"></div>
<div class="a" style="left:0px;top:1220px;width:3238px;height:66px;background:#3c4756;"></div>
<div class="a" style="left:0px;top:1286px;width:3238px;height:2px;background:#2b2b2b;"></div>
<div class="a" style="left:66px;top:1288px;width:2px;height:658px;background:#2b2b2b;"></div>
<div class="a" style="left:68px;top:1356px;width:3170px;height:2px;background:#2b2b2b;"></div>
<div class="a" style="left:68px;top:1424px;width:3170px;height:2px;background:#2b2b2b;"></div>
<div class="a" style="left:1430px;top:1358px;width:2px;height:588px;background:#2b2b2b;"></div>
<div class="a" style="left:1492px;top:1426px;width:2px;height:520px;background:#2b2b2b;"></div>
<div class="t" style="left:8px;top:1232.99px;font-size:26.33px;line-height:40px;color:#bbbbbb;transform-origin:0 27.01px;">Debug:</div>
<svg style="left:151px;top:1232px" width="42" height="40" viewBox="0 0 42 40"><path d="M6 2 Q2 6 6 11 M12 2 Q8 6 12 11 M18 2 Q14 6 18 11" stroke="#afb1b3" stroke-width="2.2" fill="none"/><path d="M27 1 H36 V34 H28 V27 H32 V9 H27 Z" fill="#afb1b3"/><path d="M2 24 Q2 16 13.5 16 Q25 16 25 24 V35 H2 Z" fill="#6cb4e2"/><circle cx="2.2" cy="18.5" r="2.2" fill="#6cb4e2"/><circle cx="24.8" cy="18.5" r="2.2" fill="#6cb4e2"/><circle cx="9" cy="24" r="3.8" fill="#fff"/><circle cx="18" cy="24" r="3.8" fill="#fff"/><circle cx="9.5" cy="24.5" r="1.7" fill="#111"/><circle cx="17.5" cy="24.5" r="1.7" fill="#111"/><ellipse cx="13.5" cy="29" rx="1.8" ry="1.2" fill="#d9b48f"/><rect x="0" y="34" width="27" height="2" fill="#d9a982" opacity="0.6"/><circle cx="36" cy="34" r="5.2" fill="#1ed41e" stroke="#2b2b2b" stroke-width="1"/></svg>
<div class="t" style="left:200px;top:1232.99px;font-size:26.33px;line-height:40px;color:#bbbbbb;transform-origin:0 27.01px;">docker</div>
<svg style="left:315px;top:1247px" width="18" height="18" viewBox="0 0 18 18"><path d="M1 1 L17 17 M17 1 L1 17" stroke="#6e7072" stroke-width="2.2"/></svg>
<div class="a" style="left:122px;top:1282px;width:240px;height:5px;background:#4a88c7;"></div>
<svg style="left:3135px;top:1238px" width="33" height="33" viewBox="0 0 33 33"><circle cx="16.5" cy="16.5" r="12.209999999999999" fill="#afb1b3"/><rect x="12.21" y="0" width="8.58" height="33" rx="0.99" fill="#afb1b3" transform="rotate(0 16.5 16.5)"/><rect x="12.21" y="0" width="8.58" height="33" rx="0.99" fill="#afb1b3" transform="rotate(60 16.5 16.5)"/><rect x="12.21" y="0" width="8.58" height="33" rx="0.99" fill="#afb1b3" transform="rotate(120 16.5 16.5)"/><circle cx="16.5" cy="16.5" r="5.9399999999999995" fill="#3c4756"/></svg>
<div class="a" style="left:3205px;top:1252px;width:33px;height:4px;background:#afb1b3;"></div>
<svg style="left:15px;top:1309px" width="34" height="35" viewBox="0 0 34 35"><path d="M14 31 Q3 29 3 19 Q3 8 15 8 H26" stroke="#499c54" stroke-width="5" fill="none"/><path d="M24 0 L34 9 L24 18 Z" fill="#499c54"/><rect x="17" y="22" width="13" height="13" fill="#afb1b3"/></svg>
<div class="t" style="left:100px;top:1302.99px;font-size:26.33px;line-height:40px;color:#bbbbbb;transform-origin:0 27.01px;">Debugger</div>
<div class="a" style="left:68px;top:1352px;width:192px;height:5px;background:#4a88c7;"></div>
<svg style="left:293px;top:1309px" width="30" height="26" viewBox="0 0 30 26"><rect x="0" y="0" width="30" height="26" fill="#afb1b3"/><path d="M9 6 L16 13 L9 20" stroke="#3c3f41" stroke-width="3" fill="none"/></svg>
<div class="t" style="left:337px;top:1302.99px;font-size:26.33px;line-height:40px;color:#bbbbbb;transform-origin:0 27.01px;">Console</div>
<div class="a" style="left:487px;top:1309px;width:30px;height:5px;background:#afb1b3;"></div>
<div class="a" style="left:487px;top:1319px;width:30px;height:8px;background:#3592c4;"></div>
<div class="a" style="left:487px;top:1332px;width:30px;height:5px;background:#afb1b3;"></div>
<div class="a" style="left:544px;top:1298px;width:2px;height:46px;background:#4f5254;"></div>
<svg style="left:573px;top:1306px" width="33" height="31" viewBox="0 0 33 31"><path d="M2 17 L15 4 L26 15" stroke="#3592c4" stroke-width="4" fill="none"/><path d="M17 21 H32 V6 Z" fill="#3592c4"/><rect x="2" y="26" width="30" height="5" fill="#afb1b3"/></svg>
<svg style="left:643px;top:1304px" width="31" height="33" viewBox="0 0 31 33"><rect x="13" y="0" width="5" height="14" fill="#3592c4"/><path d="M4 12 H27 L15.5 24 Z" fill="#3592c4"/><rect x="0" y="28" width="31" height="5" fill="#afb1b3"/></svg>
<svg style="left:711px;top:1305px" width="31" height="32" viewBox="0 0 31 32"><rect x="13" y="11" width="5" height="14" fill="#3592c4"/><path d="M4 12 H27 L15.5 0 Z" fill="#3592c4"/><rect x="0" y="27" width="31" height="5" fill="#afb1b3"/></svg>
<svg style="left:777px;top:1306px" width="36" height="35" viewBox="0 0 36 35"><path d="M1 1 L14 13" stroke="#3592c4" stroke-width="4.5"/><path d="M19 3 V19 H3 Z" fill="#3592c4"/><path d="M25 13 V33 M21 13 H29 M21 33 H29" stroke="#afb1b3" stroke-width="2.5"/></svg>
<div class="a" style="left:836px;top:1298px;width:2px;height:46px;background:#4f5254;"></div>
<svg style="left:867px;top:1307px" width="30" height="30" viewBox="0 0 30 30"><rect x="0" y="0" width="30" height="30" fill="#afb1b3"/><rect x="5" y="5" width="20" height="4" fill="#3c3f41"/><g fill="#3c3f41"><rect x="4" y="13" width="5" height="4"/><rect x="12.5" y="13" width="5" height="4"/><rect x="21" y="13" width="5" height="4"/><rect x="4" y="21" width="5" height="4"/><rect x="12.5" y="21" width="5" height="4"/><rect x="21" y="21" width="5" height="4"/></g></svg>
<svg style="left:3202px;top:1308px" width="36" height="36" viewBox="0 0 36 36"><rect x="0" y="0" width="17" height="14" fill="#afb1b3"/><rect x="20" y="0" width="11" height="14" fill="#afb1b3"/><rect x="0" y="17" width="31" height="10" fill="#afb1b3"/><path d="M24 28 H36 L30 35 Z" fill="#afb1b3"/></svg>
<div class="a" style="left:6px;top:1368px;width:46px;height:2px;background:#4f5254;"></div>
<svg style="left:17px;top:1399px" width="30" height="28" viewBox="0 0 30 28"><rect x="0" y="0" width="8" height="28" fill="#499c54"/><path d="M13 0 L30 14 L13 28 Z" fill="#499c54"/></svg>
<svg style="left:19px;top:1467px" width="21" height="27" viewBox="0 0 21 27"><rect x="0" y="0" width="7" height="27" fill="#5a5d60"/><rect x="14" y="0" width="7" height="27" fill="#5a5d60"/></svg>
<div class="a" style="left:16px;top:1538px;width:27px;height:25px;background:#c75450;"></div>
<div class="a" style="left:6px;top:1592px;width:46px;height:2px;background:#4f5254;"></div>
<svg style="left:15px;top:1620px" width="32" height="32" viewBox="0 0 32 32"><circle cx="20" cy="12" r="11" fill="#c75450"/><circle cx="12" cy="20" r="12" fill="#3c3f41"/><circle cx="12" cy="20" r="10" fill="#c75450"/></svg>
<svg style="left:15px;top:1691px" width="31" height="31" viewBox="0 0 31 31"><circle cx="15.5" cy="15.5" r="13" fill="#c75450"/><path d="M2 29 L29 2" stroke="#3c3f41" stroke-width="5"/><path d="M2 29 L29 2" stroke="#afb1b3" stroke-width="2.5"/></svg>
<div class="a" style="left:6px;top:1747px;width:46px;height:2px;background:#4f5254;"></div>
<svg style="left:15px;top:1779px" width="33" height="33" viewBox="0 0 33 33"><circle cx="16.5" cy="16.5" r="12.209999999999999" fill="#afb1b3"/><rect x="12.21" y="0" width="8.58" height="33" rx="0.99" fill="#afb1b3" transform="rotate(0 16.5 16.5)"/><rect x="12.21" y="0" width="8.58" height="33" rx="0.99" fill="#afb1b3" transform="rotate(60 16.5 16.5)"/><rect x="12.21" y="0" width="8.58" height="33" rx="0.99" fill="#afb1b3" transform="rotate(120 16.5 16.5)"/><circle cx="16.5" cy="16.5" r="5.9399999999999995" fill="#3c3f41"/></svg>
<svg style="left:40px;top:1808px" width="12" height="8" viewBox="0 0 12 8"><path d="M0 0 H12 L6 7 Z" fill="#afb1b3"/></svg>
<div class="a" style="left:6px;top:1835px;width:46px;height:2px;background:#4f5254;"></div>
<svg style="left:13px;top:1864px" width="34" height="36" viewBox="0 0 34 36"><path d="M20 0 L34 14 L28 16 L22 26 L8 12 L18 6 Z" fill="#afb1b3"/><path d="M13 21 L1 35" stroke="#afb1b3" stroke-width="3.5"/></svg>
<div class="t" style="left:101px;top:1370.99px;font-size:26.33px;line-height:40px;color:#bbbbbb;transform-origin:0 27.01px;">Frames</div>
<div class="a" style="left:76px;top:1433px;width:1131px;height:62px;border:2px solid #5e6163;border-radius:7px"></div>
<svg style="left:94px;top:1450px" width="32" height="27" viewBox="0 0 32 27"><path d="M3 15 L11 23 L29 3" stroke="#c9572f" stroke-width="5.5" fill="none"/></svg>
<div class="t" style="left:136px;top:1444.99px;font-size:26.33px;line-height:40px;color:#bbbbbb;transform-origin:0 27.01px;word-spacing:0px">Goroutine 8 dyc/internal/module/chat.(*epoll).Wait</div>
<svg style="left:1166px;top:1459.5px" width="22" height="12.5" viewBox="0 0 22 12.5"><path d="M0 0 H22 L11.0 12.5 Z" fill="#9fa2a6"/></svg>
<svg style="left:1241px;top:1450px" width="24" height="29" viewBox="0 0 24 29"><path d="M12 3 V29" stroke="#5a5d60" stroke-width="3.5"/><path d="M2 13 L12 2 L22 13" stroke="#5a5d60" stroke-width="3.5" fill="none"/></svg>
<svg style="left:1309px;top:1450px" width="25" height="29" viewBox="0 0 25 29"><path d="M12.5 0 V26" stroke="#afb1b3" stroke-width="3.5"/><path d="M2 16 L12.5 27 L23 16" stroke="#afb1b3" stroke-width="3.5" fill="none"/></svg>
<svg style="left:1375px;top:1449px" width="30" height="28" viewBox="0 0 30 28"><g fill="#afb1b3"><path d="M0 0 H30 L26 5 H4 Z"/><rect x="5" y="8" width="20" height="5"/><rect x="5" y="15.5" width="20" height="5"/><path d="M4 23 H26 L30 28 H0 Z"/></g></svg>
<div class="a" style="left:68px;top:1501px;width:1362px;height:5px;background:#323232;"></div>
<div class="a" style="left:68px;top:1506px;width:1362px;height:50px;background:#2f65ca;"></div>
<div class="t" style="left:88px;top:1509.99px;font-size:26.33px;line-height:40px;color:#ffffff;transform-origin:0 27.01px;word-spacing:0px">dyc/internal/module/chat.(*epoll).Wait at epool.go:126</div>
<div class="t" style="left:88px;top:1560.99px;font-size:26.33px;line-height:40px;color:#bbbbbb;transform-origin:0 27.01px;word-spacing:0px">dyc/internal/module/chat.start at client.go:62</div>
<div class="a" style="left:68px;top:1606px;width:1362px;height:50px;background:#4b473d;"></div>
<div class="t" style="left:88px;top:1611.29px;font-size:26.33px;line-height:40px;color:#bbbbbb;transform-origin:0 27.01px;word-spacing:0px">runtime.goexit at asm_amd64.s:1373</div>
<div class="t" style="left:74px;top:1652.49px;font-size:26.33px;line-height:40px;color:#8a8a8a;transform-origin:0 27.01px;word-spacing:-4px">Async stack trace</div>
<div class="a" style="left:340px;top:1672px;width:1090px;height:2px;background:#505254;"></div>
<div class="t" style="left:88px;top:1696.49px;font-size:26.33px;line-height:40px;color:#bbbbbb;transform-origin:0 27.01px;word-spacing:0px">dyc/internal/module/chat.init.0 at client.go:26</div>
<div class="t" style="left:1464px;top:1370.99px;font-size:26.33px;line-height:40px;color:#bbbbbb;transform-origin:0 27.01px;">Variables</div>
<svg style="left:1449px;top:1447px" width="26" height="26" viewBox="0 0 26 26"><rect x="11" y="0" width="4.5" height="26" fill="#afb1b3"/><rect x="0" y="11" width="26" height="4.5" fill="#afb1b3"/></svg>
<div class="a" style="left:1449px;top:1525px;width:26px;height:5px;background:#5a5d60;"></div>
<svg style="left:1447px;top:1588px" width="30" height="16" viewBox="0 0 30 16"><path d="M0 16 L15 0 L30 16 Z" fill="#585b5e"/></svg>
<svg style="left:1447px;top:1656px" width="30" height="16" viewBox="0 0 30 16"><path d="M0 0 L15 16 L30 0 Z" fill="#585b5e"/></svg>
<svg style="left:1447px;top:1714px" width="31" height="33" viewBox="0 0 31 33"><path d="M0 0 H19 V5 H5 V24 H0 Z" fill="#5a5d60"/><rect x="8" y="8" width="23" height="25" fill="#5a5d60"/><g fill="#3c3f41"><rect x="12" y="14" width="15" height="2.5"/><rect x="12" y="20" width="15" height="2.5"/><rect x="12" y="26" width="15" height="2.5"/></g></svg>
<div class="a" style="left:1434px;top:1772px;width:56px;height:56px;background:#5b5f62;border-radius:7px"></div>
<svg style="left:1442px;top:1790px" width="41" height="20" viewBox="0 0 41 20"><circle cx="9" cy="11" r="7" stroke="#bbbbbb" stroke-width="3.5" fill="none"/><circle cx="32" cy="11" r="7" stroke="#bbbbbb" stroke-width="3.5" fill="none"/><path d="M0 3 H41 M16 8 H25" stroke="#bbbbbb" stroke-width="3"/></svg>
<svg style="left:1499px;top:1441px" width="20" height="22" viewBox="0 0 20 22"><path d="M0 0 L20 11.0 L0 22 Z" fill="#afb1b3"/></svg>
<svg style="left:1548px;top:1436px" width="35" height="35" viewBox="0 0 35 35"><circle cx="17.5" cy="17.5" r="17.5" fill="#b5893c"/><text x="10" y="26" font-family="Liberation Sans" font-size="24" fill="#3c3420">p</text></svg>
<div class="t" style="left:1595px;top:1433.49px;font-size:26.33px;line-height:40px;color:#bbbbbb;transform-origin:0 27.01px;word-spacing:-4px"><span style="color:#589df6">e</span><span style="color:#bbbbbb"> = </span><span style="color:#8c8c8c">{*dyc/internal/module/chat.epoll | 0xc0004988c0}</span></div>
<svg style="left:1553px;top:1488px" width="26" height="28" viewBox="0 0 26 28"><g fill="#b98c42"><rect x="0" y="0" width="26" height="7"/><rect x="0" y="10.5" width="26" height="7"/><rect x="0" y="21" width="26" height="7"/></g></svg>
<div class="t" style="left:1595px;top:1483.49px;font-size:26.33px;line-height:40px;color:#bbbbbb;transform-origin:0 27.01px;word-spacing:-4px"><span style="color:#589df6">err</span><span style="color:#bbbbbb"> = </span><span style="color:#8c8c8c">{error}</span><span style="color:#bbbbbb"> </span><span style="color:#cc7832">nil</span></div>
<svg style="left:1499px;top:1541px" width="20" height="22" viewBox="0 0 20 22"><path d="M0 0 L20 11.0 L0 22 Z" fill="#afb1b3"/></svg>
<svg style="left:1548px;top:1537px" width="35" height="35" viewBox="0 0 35 35"><text x="0" y="11" font-family="Liberation Sans" font-size="11" fill="#afb1b3">1</text><text x="0" y="23" font-family="Liberation Sans" font-size="11" fill="#afb1b3">2</text><text x="0" y="35" font-family="Liberation Sans" font-size="11" fill="#afb1b3">3</text><g fill="#3d94ad"><rect x="11" y="2" width="24" height="7"/><rect x="11" y="14" width="24" height="7"/><rect x="11" y="26" width="24" height="7"/></g></svg>
<div class="t" style="left:1595px;top:1533.49px;font-size:26.33px;line-height:40px;color:#bbbbbb;transform-origin:0 27.01px;word-spacing:-4px"><span style="color:#589df6">events</span><span style="color:#bbbbbb"> = </span><span style="color:#8c8c8c">{[]syscall.EpollEvent}</span><span style="color:#bbbbbb"> len:100, cap:100</span></div>
<svg style="left:1551px;top:1589px" width="30" height="30" viewBox="0 0 30 30"><rect x="0" y="0" width="30" height="30" fill="#40849b"/><text x="3" y="24" font-family="Liberation Sans" font-weight="bold" font-size="17" fill="#1e3640">01</text></svg>
<div class="t" style="left:1595px;top:1583.49px;font-size:26.33px;line-height:40px;color:#bbbbbb;transform-origin:0 27.01px;word-spacing:-4px"><span style="color:#589df6">n</span><span style="color:#bbbbbb"> = </span><span style="color:#8c8c8c">{int}</span><span style="color:#bbbbbb"> </span><span style="color:#6897bb">0</span></div>
<svg style="left:1548px;top:1637px" width="35" height="35" viewBox="0 0 35 35"><text x="0" y="11" font-family="Liberation Sans" font-size="11" fill="#afb1b3">1</text><text x="0" y="23" font-family="Liberation Sans" font-size="11" fill="#afb1b3">2</text><text x="0" y="35" font-family="Liberation Sans" font-size="11" fill="#afb1b3">3</text><g fill="#3d94ad"><rect x="11" y="2" width="24" height="7"/><rect x="11" y="14" width="24" height="7"/><rect x="11" y="26" width="24" height="7"/></g></svg>
<div class="t" style="left:1595px;top:1633.49px;font-size:26.33px;line-height:40px;color:#bbbbbb;transform-origin:0 27.01px;word-spacing:-4px"><span style="color:#589df6">connections</span><span style="color:#bbbbbb"> = </span><span style="color:#8c8c8c">{[]*dyc/internal/module/chat.Client}</span><span style="color:#bbbbbb"> len:0, cap:0</span></div>
</body></html>
